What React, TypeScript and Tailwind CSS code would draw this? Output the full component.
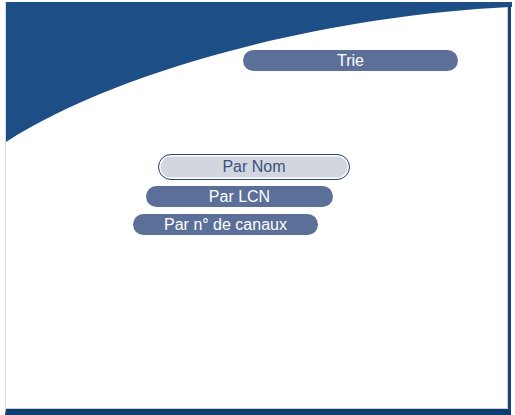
import React from "react";

const items = [
  { label: "Par Nom", ml: "ml-[152px]", w: "w-[192px]", mt: "mt-0", selected: true },
  { label: "Par LCN", ml: "ml-[140px]", w: "w-[187px]", mt: "mt-[6px]", selected: false },
  { label: "Par n° de canaux", ml: "ml-[127px]", w: "w-[185px]", mt: "mt-[7px]", selected: false },
];

function Wave() {
  return (
    <svg
      className="absolute left-0 top-0"
      width="506"
      height="150"
      viewBox="0 0 506 150"
      aria-hidden
    >
      <path d="M0 0 L506 0 L506 5 C300 15 100 75 0 140 Z" fill="#1d4e85" />
    </svg>
  );
}

export default function App() {
  return (
    <div
      className="w-[515px] h-[415px] bg-white overflow-hidden"
      style={{ fontFamily: '"Liberation Sans", Arial, sans-serif' }}
    >
      <div className="relative ml-[5px] mt-[2px] w-[506px] h-[413px] bg-white border-l border-l-[#d8dbe0] border-r-[3px] border-r-[#1a4579] border-b-[6px] border-b-[#0c3d73] shadow-[inset_-1px_-1px_0_#c9ced8]">
        <Wave />
        <div className="relative flex flex-col">
          <div className="mt-[48px] ml-[237px] w-[215px] h-[21px] rounded-full bg-[#5b6f98] flex items-center justify-center text-white text-[16px] leading-none">
            Trie
          </div>
          <div className="mt-[83px] flex flex-col">
            {items.map((it) =>
              it.selected ? (
                <div
                  key={it.label}
                  className={`${it.mt} ${it.ml} ${it.w} h-[26px] rounded-full border-[1.5px] border-[#2e4166] bg-[#d3d6de] shadow-[inset_0_0_0_1.5px_#ffffff] flex items-center justify-center text-[#3c5280] text-[16px] leading-none`}
                >
                  {it.label}
                </div>
              ) : (
                <div
                  key={it.label}
                  className={`${it.mt} ${it.ml} ${it.w} h-[21px] rounded-full bg-[#5b6f98] flex items-center justify-center text-white text-[16px] leading-none`}
                >
                  {it.label}
                </div>
              )
            )}
          </div>
        </div>
      </div>
    </div>
  );
}
